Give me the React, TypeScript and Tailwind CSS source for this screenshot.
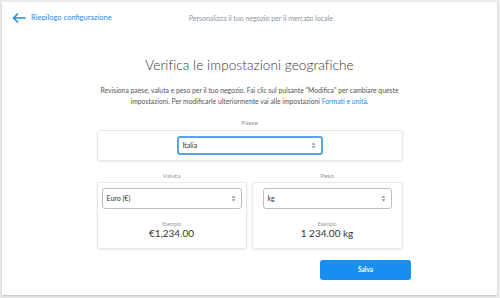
import { ReactNode } from "react";

function SelectBox({ value, className }: { value: string; className: string }) {
  return (
    <div
      className={`flex items-center justify-between rounded-[3px] bg-white pl-[4px] pr-[5px] text-[7px] text-[#333] ${className}`}
    >
      <span>{value}</span>
      <svg width="5" height="7" viewBox="0 0 5 7" fill="#8a94a0">
        <path d="M2.5 0.5 L4.5 2.8 H0.5 Z" />
        <path d="M2.5 6.5 L4.5 4.2 H0.5 Z" />
      </svg>
    </div>
  );
}

function Panel({ children, className }: { children: ReactNode; className: string }) {
  return (
    <div
      className={`rounded-[3px] border border-[#e6e9ed] bg-white shadow-[0_1px_3px_rgba(0,0,0,0.08)] ${className}`}
    >
      {children}
    </div>
  );
}

export default function App() {
  return (
    <div
      className="h-[298px] w-[500px] bg-[#ececec] pl-[2px] pt-[2px]"
      style={{ fontFamily: "Lato, 'Open Sans', sans-serif" }}
    >
      <div className="flex h-[293px] w-[495px] flex-col bg-white shadow-[0_1px_2px_rgba(0,0,0,0.2)]">
        {/* Header */}
        <div className="flex h-[32px] items-center pl-[10px]">
          <svg width="14" height="10" viewBox="0 0 14 10" fill="none" stroke="#1a8cf0" strokeWidth="1.6" strokeLinecap="round" strokeLinejoin="round">
            <path d="M13 5H1.5M5.5 1L1.5 5l4 4" />
          </svg>
          <span className="ml-[5px] text-[7.5px] text-[#1a8cf0]">Riepilogo configurazione</span>
          <span className="ml-[77px] text-[7px] text-[#8b949e]">
            Personalizza il tuo negozio per il mercato locale
          </span>
        </div>

        {/* Title */}
        <h1 className="mt-[23px] text-center text-[13.5px] font-light leading-[17px] tracking-[0.1px] text-[#333]">
          Verifica le impostazioni geografiche
        </h1>
        <p className="mx-auto mt-[11px] w-[310px] text-center text-[6.8px] leading-[11px] text-[#555]">
          Revisiona paese, valuta e peso per il tuo negozio. Fai clic sul pulsante "Modifica" per cambiare queste
          impostazioni. Per modificarle ulteriormente vai alle impostazioni{" "}
          <span className="text-[#1a8cf0]">Formati e unità</span>.
        </p>

        {/* Paese */}
        <div className="mt-[12px] text-center text-[6.5px] leading-[8px] text-[#999]">Paese</div>
        <Panel className="mx-auto mt-[3px] flex h-[31px] w-[306px] items-center justify-center">
          <SelectBox value="Italia" className="h-[19px] w-[146px] border-2 border-[#5aa3ea]" />
        </Panel>

        {/* Valuta / Peso */}
        <div className="mx-auto mt-[11px] flex w-[306px] gap-[5px]">
          <div className="flex w-[150px] flex-col">
            <div className="text-center text-[6.5px] leading-[8px] text-[#999]">Valuta</div>
            <Panel className="mt-[2px] flex h-[67px] flex-col items-center px-[4px] pt-[5px]">
              <SelectBox value="Euro (€)" className="h-[21px] w-full border border-[#b8c0c8]" />
              <div className="mt-[12px] text-[5px] leading-[6px] text-[#999]">Esempio</div>
              <div className="text-[10px] leading-[13px] text-[#333]">€1,234.00</div>
            </Panel>
          </div>
          <div className="flex w-[151px] flex-col">
            <div className="text-center text-[6.5px] leading-[8px] text-[#999]">Peso</div>
            <Panel className="mt-[2px] flex h-[67px] flex-col items-center pt-[5px]">
              <SelectBox value="kg" className="h-[21px] w-[129px] border border-[#b8c0c8]" />
              <div className="mt-[12px] text-[5px] leading-[6px] text-[#999]">Esempio</div>
              <div className="text-[10px] leading-[13px] text-[#333]">1 234.00 kg</div>
            </Panel>
          </div>
        </div>

        {/* Footer */}
        <div className="mt-[11px] flex justify-end pr-[86px]">
          <button className="h-[20px] w-[91px] rounded-[3px] bg-[#168ff0] text-[6.5px] font-bold text-white">
            Salva
          </button>
        </div>
      </div>
    </div>
  );
}
